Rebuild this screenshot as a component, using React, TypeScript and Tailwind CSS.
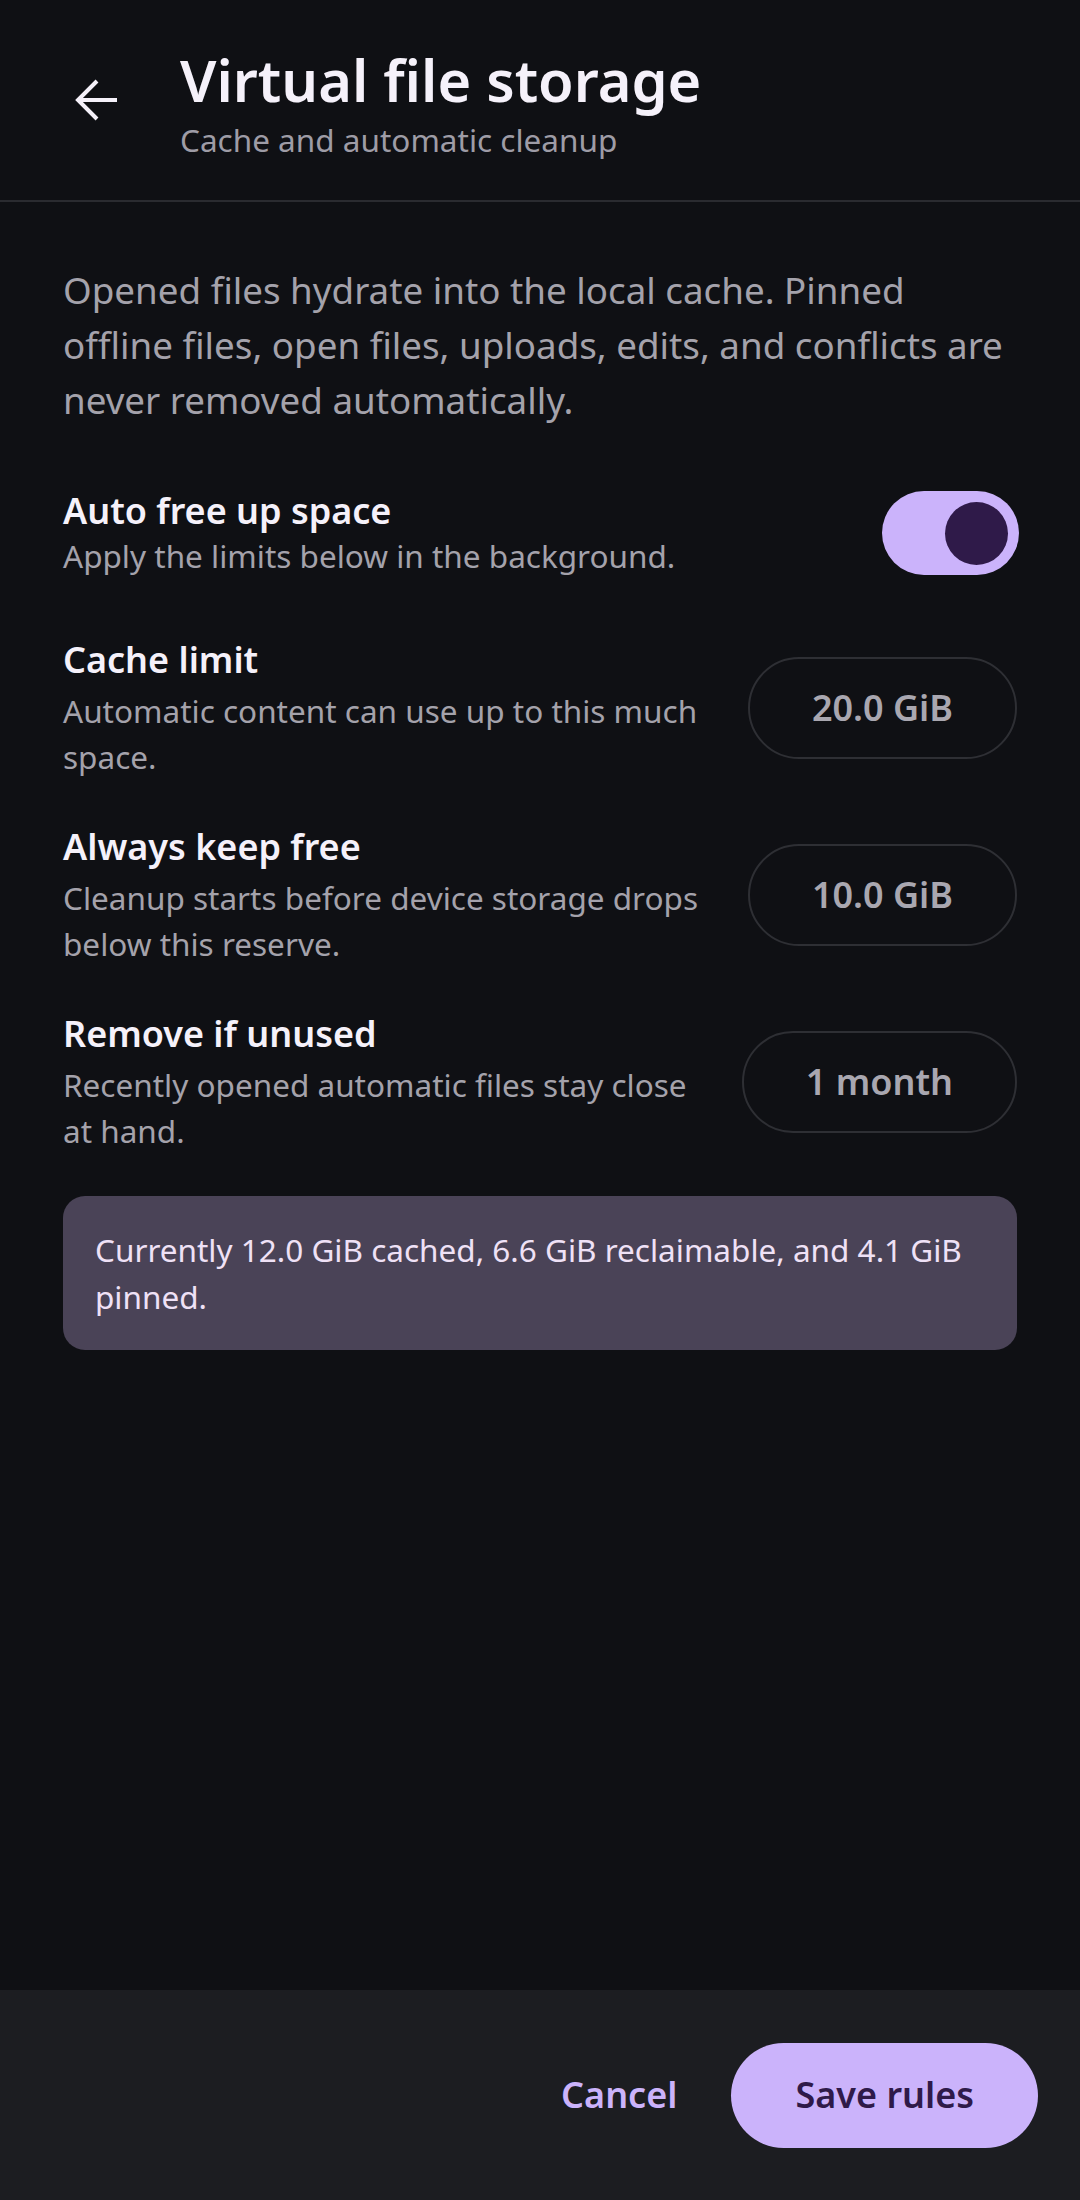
import React, { useState } from "react";

type Rule = {
  title: string;
  hint: string;
  value: string;
};

const rules: Rule[] = [
  {
    title: "Cache limit",
    hint: "Automatic content can use up to this much space.",
    value: "20.0 GiB",
  },
  {
    title: "Always keep free",
    hint: "Cleanup starts before device storage drops below this reserve.",
    value: "10.0 GiB",
  },
  {
    title: "Remove if unused",
    hint: "Recently opened automatic files stay close at hand.",
    value: "1 month",
  },
];

const BackArrow = () => (
  <svg width="44" height="44" viewBox="0 0 44 44" fill="none">
    <path
      d="M6 22 H44 M24 3 L5 22 L24 41"
      stroke="#f5f1fa"
      strokeWidth="4"
      strokeLinejoin="miter"
    />
  </svg>
);

const App: React.FC = () => {
  const [autoClean, setAutoClean] = useState(true);

  return (
    <div className="min-h-[2200px] flex flex-col bg-[#0f1014] font-['Noto_Sans',sans-serif] text-[#f5f1fa]">
      {/* Top bar */}
      <header className="h-[202px] flex items-start border-b-2 border-[#2a2b30] pl-[73px] pt-[46px]">
        <button className="mt-[32px]" aria-label="Back">
          <BackArrow />
        </button>
        <div className="ml-[63px] flex flex-col">
          <h1 className="text-[57.75px] leading-[68px] font-semibold tracking-[0px]">
            Virtual file storage
          </h1>
          <p className="mt-[6px] text-[31.5px] leading-[40px] text-[#9e9ca6]">
            Cache and automatic cleanup
          </p>
        </div>
      </header>

      {/* Body */}
      <main className="flex-1 px-[63px] pt-[61px]">
        <p className="text-[36.75px] leading-[55px] text-[#a4a2ab]">
          Opened files hydrate into the local cache. Pinned offline files, open
          files, uploads, edits, and conflicts are never removed automatically.
        </p>

        <div className="mt-[59px] flex items-center justify-between">
          <div className="flex flex-col">
            <span className="text-[36px] leading-[48px] font-semibold">
              Auto free up space
            </span>
            <span className="-mt-[2px] text-[31.5px] leading-[46px] text-[#a4a2ab]">
              Apply the limits below in the background.
            </span>
          </div>
          <button
            onClick={() => setAutoClean(!autoClean)}
            className={`w-[137px] h-[84px] rounded-full flex items-center px-[11px] mr-[-2px] ${
              autoClean ? "bg-[#cbb3fb] justify-end" : "bg-[#2d2e33] justify-start"
            }`}
          >
            <span className="w-[63px] h-[63px] rounded-full bg-[#2f1a49]" />
          </button>
        </div>

        <div className="mt-[57px] flex flex-col gap-[43px]">
          {rules.map((rule) => (
            <div key={rule.title} className="flex items-center gap-[32px]">
              <div className="flex-1 flex flex-col">
                <span className="text-[36px] leading-[48px] font-semibold">
                  {rule.title}
                </span>
                <span className="mt-[4px] text-[31.5px] leading-[46px] text-[#a4a2ab]">
                  {rule.hint}
                </span>
              </div>
              <button className="h-[102px] shrink-0 rounded-full border-2 border-[#2e2f34] px-[62px] text-[36px] font-semibold text-[#a9a7b0]">
                {rule.value}
              </button>
            </div>
          ))}
        </div>

        <div className="mt-[42px] rounded-[22px] bg-[#4a4357] px-[32px] py-[30px] text-[31.5px] leading-[47px] text-[#efe1f6]">
          Currently 12.0 GiB cached, 6.6 GiB reclaimable, and 4.1 GiB pinned.
        </div>
      </main>

      {/* Actions */}
      <footer className="h-[210px] flex items-center justify-end gap-[54px] bg-[#1c1d21] pr-[42px]">
        <button className="text-[36px] font-semibold text-[#cbb3fb]">
          Cancel
        </button>
        <button className="h-[105px] rounded-full bg-[#cbb3fb] px-[64px] text-[36px] font-semibold text-[#2f1a49]">
          Save rules
        </button>
      </footer>
    </div>
  );
};

export default App;
